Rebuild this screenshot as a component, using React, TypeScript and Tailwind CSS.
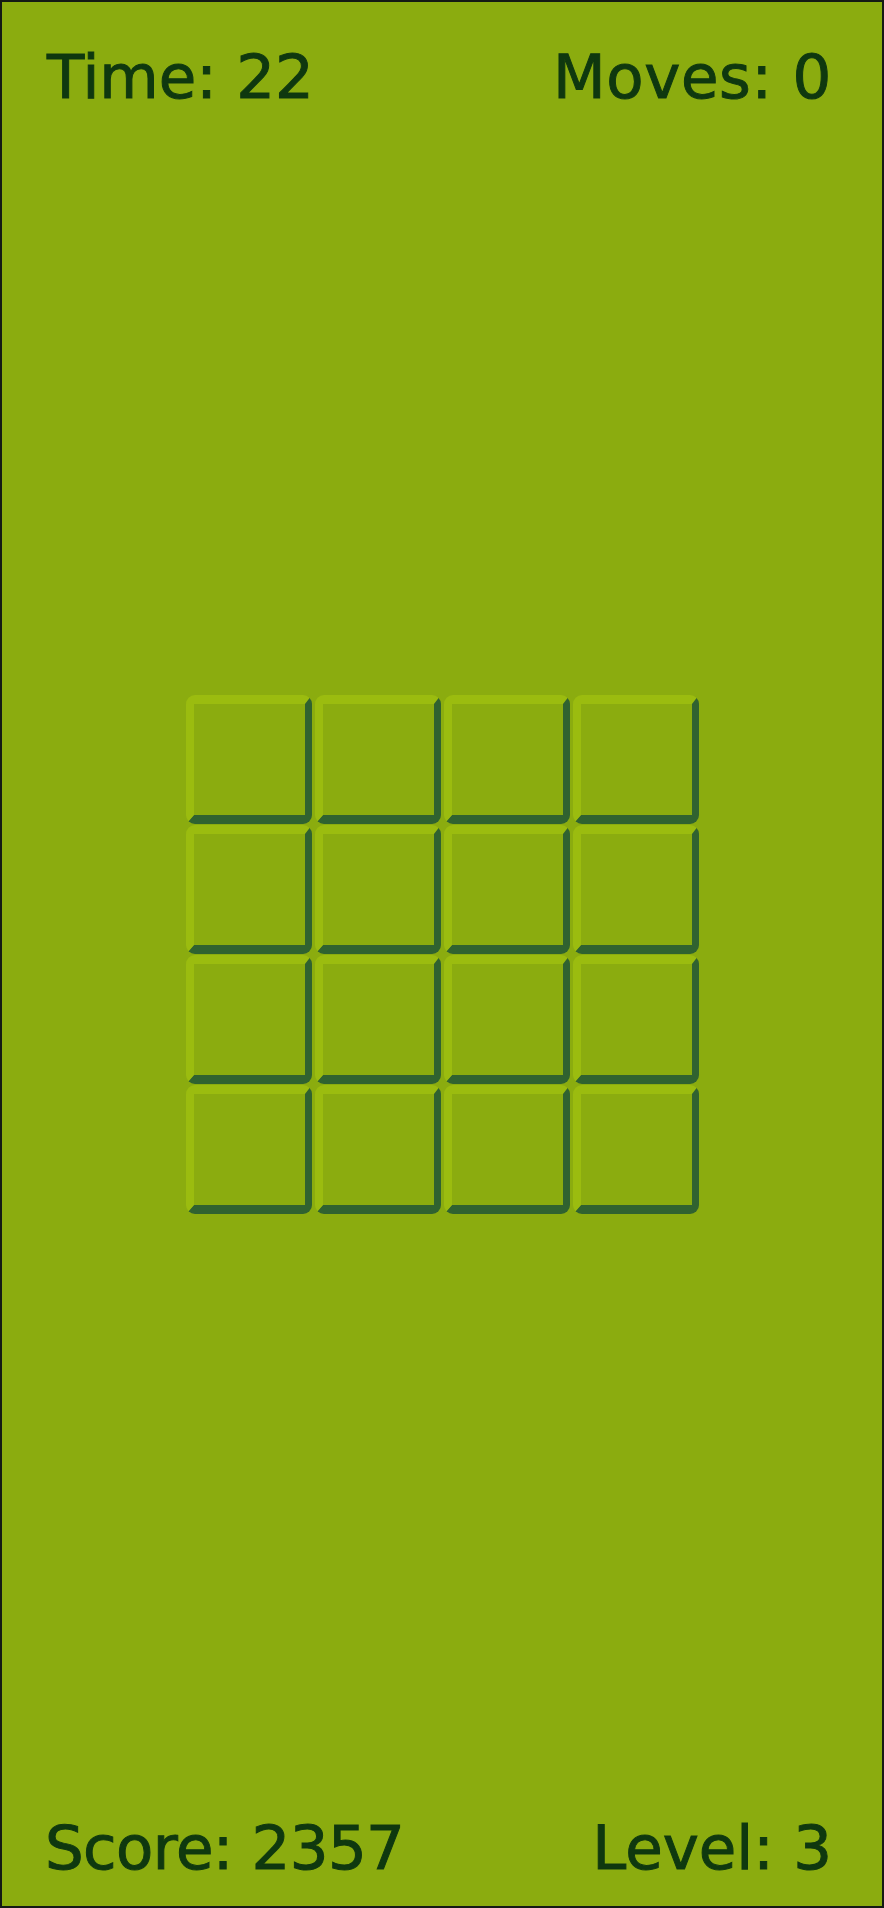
import React from 'react'

const tiles = Array.from({ length: 16 }, (_, i) => i)

function Tile() {
  return (
    <div className="h-[129px] w-[126px] rounded-[9px] border-t-[9px] border-l-[8px] border-r-[7px] border-b-[9px] border-t-[#9bbc0f] border-l-[#9bbc0f] border-r-[#306230] border-b-[#306230] bg-[#8bac0f]" />
  )
}

export default function App() {
  return (
    <div
      className="flex h-[1908px] w-full flex-col justify-between border-2 border-[#141a14] bg-[#8bac0f] text-[#0f380f] [-webkit-text-stroke:1px_#0f380f]"
      style={{ fontFamily: '"DejaVu Sans", "Liberation Sans", sans-serif' }}
    >
      {/* Top stats */}
      <div className="flex items-start justify-between pl-[45px] pr-[50px] pt-[44px] text-[61px] leading-none">
        <span>Time: 22</span>
        <span className="tracking-[0.01em]">Moves: 0</span>
      </div>

      {/* Board */}
      <div className="flex justify-center pb-[16px]">
        <div className="grid grid-cols-4 gap-x-[3px] gap-y-[1px]">
          {tiles.map((t) => (
            <Tile key={t} />
          ))}
        </div>
      </div>

      {/* Bottom stats */}
      <div className="flex items-end justify-between pl-[43px] pr-[50px] pb-[28px] text-[61px] leading-none">
        <span className="tracking-[-0.01em]">Score: 2357</span>
        <span>Level: 3</span>
      </div>
    </div>
  )
}
